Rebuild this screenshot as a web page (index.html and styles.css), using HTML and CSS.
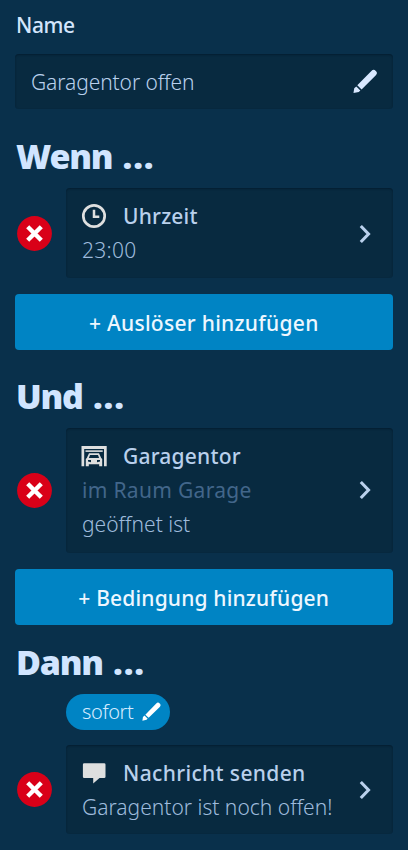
FILE: index.html
```html
<!DOCTYPE html>
<html lang="de">
<head>
<meta charset="utf-8">
<meta name="viewport" content="width=device-width, initial-scale=1">
<title>Automation</title>
<link rel="stylesheet" href="styles.css">
</head>
<body>
<svg class="defs" aria-hidden="true">
  <symbol id="pencil" viewBox="0 0 24 24"><path d="M4.2 16 18 1.9a3 3 0 0 1 4.4 4.3L8.4 20Z"/><path d="M3.2 17.2 7.2 21.1 5.7 22.5.5 23.6 1.2 18.8Z"/></symbol>
  <symbol id="chevron" viewBox="0 0 12 20"><path d="m1.8 2 7.7 8-7.7 8" fill="none" stroke="currentColor" stroke-width="3.1"/></symbol>
  <symbol id="cross" viewBox="0 0 35 35"><circle cx="17.5" cy="17.5" r="17.4" fill="#d90018"/><path d="m10.7 10.8 13.6 13.4m0-13.4L10.7 24.2" stroke="#fff" stroke-width="4.4"/></symbol>
</svg>
<main class="page">
  <label class="label">Name</label>
  <div class="field"><span class="field-text">Garagentor offen</span><svg class="pencil"><use href="#pencil"/></svg></div>

  <h1 class="heading wenn">Wenn <span class="dots">...</span></h1>
  <div class="row">
    <svg class="remove"><use href="#cross"/></svg>
    <div class="card">
      <div class="content">
        <div class="title"><svg class="icon" viewBox="0 0 26 26"><circle cx="13" cy="13" r="10.7" fill="none" stroke="currentColor" stroke-width="2.7"/><path d="M13 6.7v7h5.3" fill="none" stroke="currentColor" stroke-width="2.5"/></svg><span class="t-uhrzeit">Uhrzeit</span></div>
        <div class="detail d-time">23:00</div>
      </div>
      <svg class="chevron"><use href="#chevron"/></svg>
    </div>
  </div>
  <button class="button"><span class="b-trigger">+ Auslöser hinzufügen</span></button>

  <h1 class="heading und">Und <span class="dots">...</span></h1>
  <div class="row">
    <svg class="remove"><use href="#cross"/></svg>
    <div class="card tall">
      <div class="content">
        <div class="title"><svg class="icon" viewBox="0 0 26 26"><path d="M.5 3h25.2v20.3h-2.7V6H3.2v17.3H.5Z"/><path d="M4.5 7.3h17.2v1.6H4.5Z"/><path fill-rule="evenodd" d="M8 10.2h10l2.2 4.7 1 1.2v7.1h-3v-2H7.8v2h-3v-7.1l1-1.2Zm1 1.7L7.9 15h10.2L17 11.9ZM7 17v1.6l3 .6V17Zm9 0v2.2l3-.6V17Z"/></svg><span class="t-gate">Garagentor</span></div>
        <div class="room">im Raum Garage</div>
        <div class="detail d-open">geöffnet ist</div>
      </div>
      <svg class="chevron"><use href="#chevron"/></svg>
    </div>
  </div>
  <button class="button"><span class="b-condition">+ Bedingung hinzufügen</span></button>

  <h1 class="heading dann">Dann <span class="dots">...</span></h1>
  <div class="chip"><span class="chip-text">sofort</span><svg class="pencil small"><use href="#pencil"/></svg></div>
  <div class="row">
    <svg class="remove"><use href="#cross"/></svg>
    <div class="card">
      <div class="content">
        <div class="title"><svg class="icon bubble" viewBox="0 0 26 26"><path d="M3.2 3.2h20q1.3 0 1.3 1.3v12.2q0 1.3-1.3 1.3h-4.7L12.2 23.5V18h-9q-1.3 0-1.3-1.3V4.5q0-1.3 1.3-1.3Z"/></svg><span class="t-message">Nachricht senden</span></div>
        <div class="detail d-message">Garagentor ist noch offen!</div>
      </div>
      <svg class="chevron"><use href="#chevron"/></svg>
    </div>
  </div>
</main>
</body>
</html>
```
FILE: styles.css
```css
* { box-sizing: border-box; }
body {
  margin: 0;
  background: #09304b;
  color: #b9d0ec;
  font: 400 21px/34px "Noto Sans", "Open Sans", sans-serif;
}
.defs { position: absolute; width: 0; height: 0; }
svg { display: block; flex: none; fill: currentColor; }
.page { display: flex; flex-direction: column; height: 850px; padding: 8px 15.5px 0 15px; overflow: hidden; white-space: nowrap; }
.label { color: #d3e5fc; font-weight: 500; height: 46px; padding-left: 1px; letter-spacing: -.4px; }
.field, .card {
  background: #082a40;
  border-radius: 4px;
  box-shadow: inset 0 1px 2px #041d30;
}
.field { display: flex; align-items: center; justify-content: space-between; height: 55px; padding: 0 15.5px 0 16px; font-weight: 300; }
.field-text { letter-spacing: -.1px; }
.pencil { width: 24.5px; height: 24.5px; color: #d8e8ff; }
.heading { margin: 0; height: 50px; padding-left: 1px; font-size: 34px; line-height: 50px; font-weight: 900; color: #d1e5ff; letter-spacing: -1.2px; }
.dots { letter-spacing: .8px; margin-left: 2.5px; }
.wenn { margin-top: 22px; margin-bottom: 7px; }
.und { margin-top: 21px; margin-bottom: 6.5px; }
.und, .dann { letter-spacing: -1.2px; }
.dann { margin-top: 12px; margin-bottom: 7px; }
.row { display: flex; align-items: center; gap: 14.5px; padding-left: 1.5px; }
.remove { width: 35px; height: 35px; margin-top: 1px; }
.card { display: flex; flex: 1; align-items: center; justify-content: space-between; padding: 11px 22px 10.5px 16px; min-width: 0; }
.tall { padding-bottom: 12px; }
.title { display: flex; align-items: center; gap: 15px; font-weight: 500; letter-spacing: .2px; }
.icon { width: 26px; height: 26px; color: #dedfdf; margin-left: -1px; margin-right: 1px; }
.t-message { letter-spacing: .35px; }
.detail { font-weight: 300; color: #9ebbdc; }
.d-time { letter-spacing: .3px; }
.room { color: #42668a; letter-spacing: .32px; }
.chevron { width: 12px; height: 20px; color: #b9d0ec; margin-top: 1.5px; }
.button { height: 56px; margin-top: 16.5px; padding: 1px 0 0; border: 0; border-radius: 4px; background: #0084c4; color: #edf7ff; font: inherit; font-weight: 500; }
.b-trigger { letter-spacing: .28px; }
.b-condition { letter-spacing: .17px; }
.chip { display: flex; align-items: center; gap: 9px; align-self: flex-start; width: 103.5px; height: 35.5px; margin: 0 0 15px 51px; padding-left: 16px; border-radius: 18px; background: #0084c4; color: #d4eaff; font-size: 20px; font-weight: 300; }
.chip-text { letter-spacing: -.4px; }
.small { width: 19px; height: 19px; color: #fff; }
```
